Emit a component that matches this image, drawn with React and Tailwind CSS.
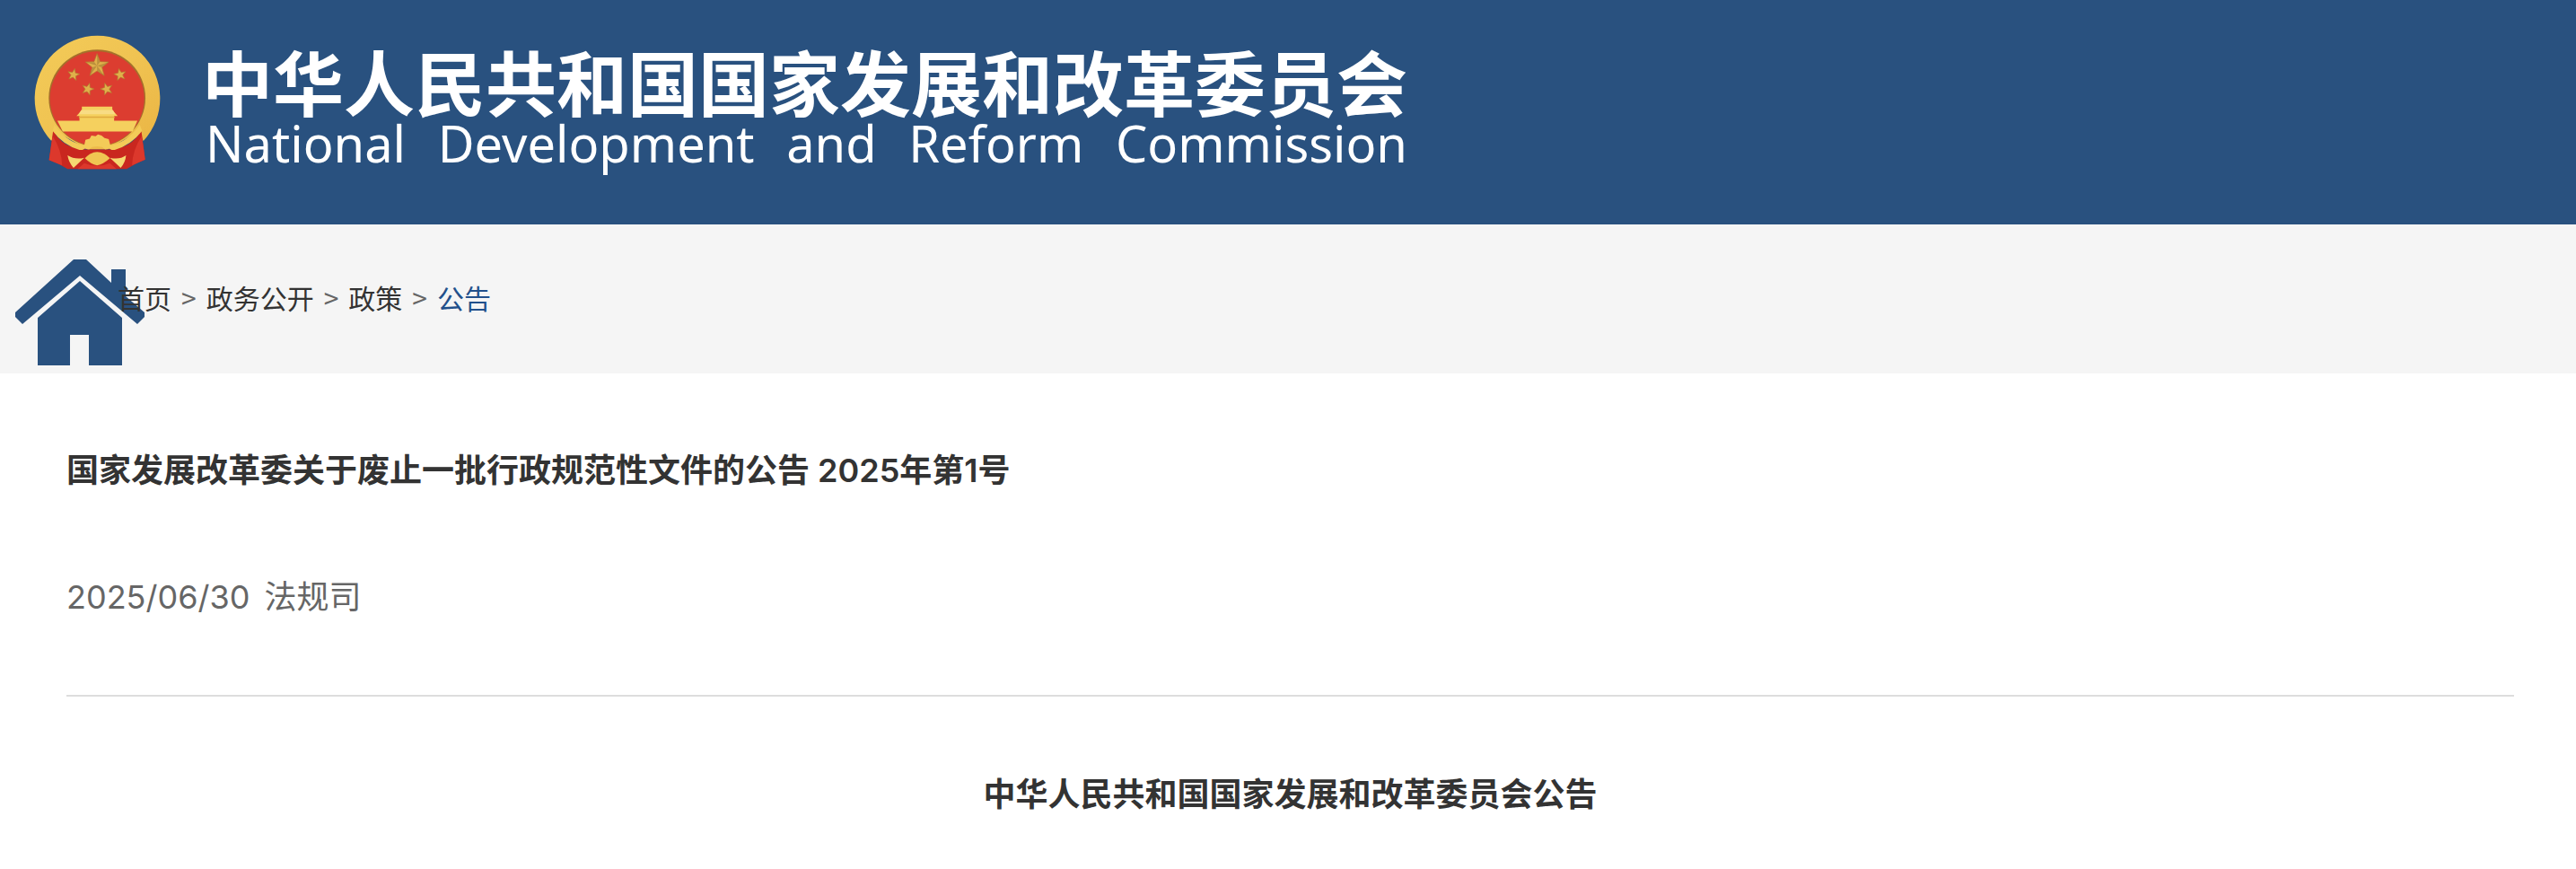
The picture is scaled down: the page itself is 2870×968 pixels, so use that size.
import React from 'react';

const englishName = 'National Development and Reform Commission';

const crumbs = [
    { label: '首页', href: '#home' },
    { label: '政务公开', href: '#affairs' },
    { label: '政策', href: '#policy' },
    { label: '公告', href: '#notice', current: true },
];

// five-pointed star as polygon points
const starPoints = (cx, cy, r, turn = 0) => {
    const points = [];
    for (let i = 0; i < 10; i++) {
        const radius = i % 2 === 0 ? r : r * 0.42;
        const angle = -Math.PI / 2 + turn + (i * Math.PI) / 5;
        points.push(`${(cx + radius * Math.cos(angle)).toFixed(1)},${(cy + radius * Math.sin(angle)).toFixed(1)}`);
    }
    return points.join(' ');
};

const Emblem = () => (
    <svg viewBox="54 54 424 460" className="w-[141px] h-[153px] shrink-0" role="img" aria-label="国徽">
        <defs>
            <linearGradient id="wreath" x1="0" y1="0" x2="1" y2="1">
                <stop offset="0" stopColor="#f3cb58" />
                <stop offset="0.5" stopColor="#f0c352" />
                <stop offset="1" stopColor="#eab443" />
            </linearGradient>
        </defs>
        {/* Wreath */}
        <path d="M112 412 A210 210 0 1 1 420 412 L404 380 L300 440 L232 440 L128 380 Z" fill="url(#wreath)" />
        <circle cx="265" cy="268" r="162" fill="#a5702b" />
        <circle cx="265" cy="270" r="158" fill="#dc3d30" />
        {/* Ribbon */}
        <path d="M118 376 L104 476 Q138 488 166 506 H364 Q394 486 426 474 L413 376 Q380 440 300 440 H230 Q150 440 118 376 Z" fill="#c9271f" />
        <path d="M116 395 L104 476 L148 494 Q146 440 116 395 Z M415 395 L426 474 L382 494 Q384 440 415 395 Z" fill="#dc382c" />
        <path d="M222 486 Q265 505 308 486 L330 506 H200 Z" fill="#dc382c" />
        <path d="M122 358 Q170 424 232 428 Q222 444 206 442 Q150 425 116 378 Z M408 358 Q360 424 298 428 Q308 444 324 442 Q380 425 416 378 Z" fill="#f3cb58" />
        {/* Stars */}
        <g fill="#e0b04a" stroke="#b07a30" strokeWidth="2">
            <polygon points={starPoints(265, 160, 41)} />
            <polygon points={starPoints(186, 190, 21, 0.2)} />
            <polygon points={starPoints(342, 190, 21, -0.2)} />
            <polygon points={starPoints(234, 238, 21, 0.3)} />
            <polygon points={starPoints(297, 238, 21, -0.3)} />
        </g>
        <path d="M265 160 L265 120 L274 148 Z M265 160 L303 148 L280 165 Z M265 160 L289 193 L265 176 Z M265 160 L241 193 L250 165 Z M265 160 L227 148 L256 148 Z" fill="#8f6a2c" opacity="0.45" />
        {/* Gate */}
        <path d="M214 297 H316 V308 L334 328 H322 V344 H400 L384 380 H150 L132 344 H206 V328 H196 L214 308 Z" fill="#f5d05e" />
        <path d="M212 308 H318 L326 322 H204 Z" fill="#f8dc84" />
        <path d="M204 330 H324 V334 H204 Z" fill="#dfaa40" />
        {/* Gear and knot */}
        <path d="M220 436 L226 408 L240 404 L246 394 L260 396 L268 390 L280 394 L290 402 L304 406 L312 436 L292 440 L282 432 L265 430 L248 432 L238 440 Z" fill="#f3cb58" />
        <path d="M224 470 Q242 450 265 449 Q290 450 308 470 Q286 490 265 494 Q244 490 224 470 Z" fill="#f0c552" />
        <path d="M166 460 Q192 476 222 468 L186 502 Q170 484 166 460 Z M362 460 Q340 476 308 468 L344 502 Q360 484 362 460 Z" fill="#f6d872" />
    </svg>
);

const HouseIcon = () => (
    <svg viewBox="0 0 144 118" className="w-36 h-[118px] shrink-0" fill="#29517f" aria-hidden="true">
        <path d="M65 0 H79 L107 26 V11 H123 V41 L144 59 V64 L136 72 L72 18 L8 72 L0 64 V59 Z" />
        <path d="M72 24 L119 65 V118 H82 V84 H61 V118 H25 V65 Z" />
    </svg>
);

const App = () => {
    return (
        <div className="min-h-screen bg-white text-[#333333] font-['Inter','Noto_Sans_CJK_SC',sans-serif]">
            {/* Header */}
            <header className="bg-[#29517f] text-white flex items-start gap-[46px] px-[38px] pt-[38px] pb-[59px]">
                <Emblem />
                <div className="pt-3">
                    <h1 className="text-[79px] leading-[80px] font-bold font-['Noto_Sans_CJK_SC',sans-serif]">
                        中华人民共和国国家发展和改革委员会
                    </h1>
                    <p className="pl-1 flex justify-between text-[56px] leading-[58px] font-['Noto_Sans',sans-serif]">
                        {englishName.split(' ').map((word) => (
                            <span key={word}>{word}</span>
                        ))}
                    </p>
                </div>
            </header>

            {/* Breadcrumb */}
            <nav aria-label="面包屑" className="bg-[#f5f5f5] flex items-start pl-[17px] pt-[39px] pb-[9px]">
                <HouseIcon />
                <ol className="relative -ml-[30px] pt-5 flex items-center gap-[11px] text-[30px] leading-[44px] font-['Noto_Sans_CJK_SC',sans-serif]">
                    {crumbs.map((crumb, idx) => (
                        <li key={crumb.label} className="flex items-center gap-[11px]">
                            {idx > 0 && <span className="text-[#666666]">&gt;</span>}
                            <a href={crumb.href} className={crumb.current ? 'text-[#22508b]' : 'text-[#333333]'}>
                                {crumb.label}
                            </a>
                        </li>
                    ))}
                </ol>
            </nav>

            {/* Article */}
            <main className="pl-[74px] pr-[69px] pt-20">
                <h2 className="text-4xl leading-[56px] font-semibold">
                    国家发展改革委关于废止一批行政规范性文件的公告 2025年第1号
                </h2>
                <p className="mt-[85px] flex gap-4 text-4xl leading-[56px] text-[#666666]">
                    <time dateTime="2025-06-30">2025/06/30</time>
                    <span>法规司</span>
                </p>
                <hr className="mt-[81px] border-t-2 border-[#dddddd]" />
                <h3 className="mt-[81px] text-4xl leading-[56px] font-semibold text-center">
                    中华人民共和国国家发展和改革委员会公告
                </h3>
            </main>
        </div>
    );
};

export default App;
